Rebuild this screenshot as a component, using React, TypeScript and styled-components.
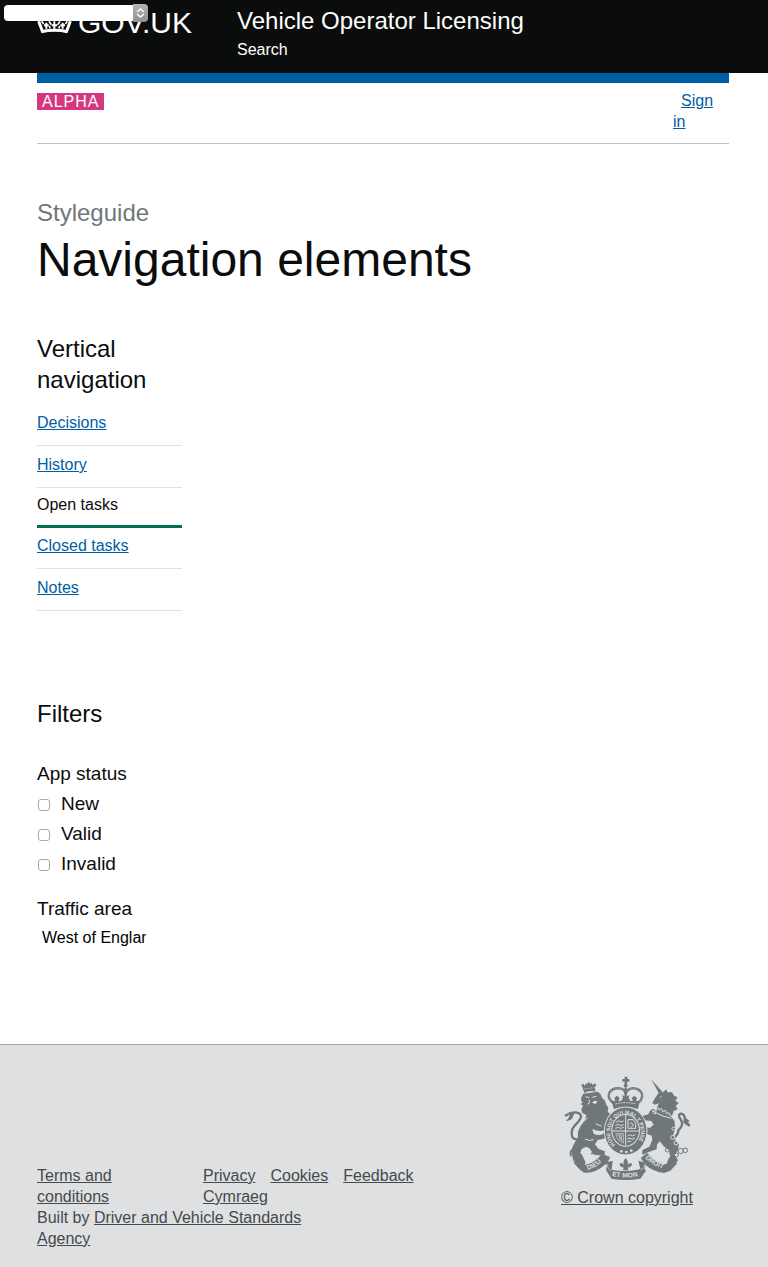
import React from "react";
import styled, { createGlobalStyle, css } from "styled-components";

const GlobalStyle = createGlobalStyle`
  *, *::before, *::after { box-sizing: border-box; }
  body {
    margin: 0;
    background: #fff;
    color: #0b0c0c;
    font-family: "Liberation Sans", Helvetica, Arial, sans-serif;
    font-size: 16px;
    line-height: 21px;
  }
  h1, h2, h3, p, ul, fieldset { margin: 0; padding: 0; font-weight: 400; }
  ul { list-style: none; }
  fieldset { border: 0; min-width: 0; }
`;

const gutters = css`
  padding-left: 37px;
  padding-right: 39px;
`;

const Header = styled.header`
  ${gutters}
  display: flex;
  height: 73px;
  padding-top: 6px;
  background: #0b0c0c;
  color: #fff;
`;

const HomeLink = styled.a`
  display: flex;
  align-items: flex-start;
  gap: 5px;
  width: 200px;
  color: #fff;
  font-size: 30px;
  line-height: 34px;
  text-decoration: none;
`;

const ServiceNav = styled.nav`
  display: flex;
  flex-direction: column;
  align-items: flex-start;
  gap: 3px;
`;

const ServiceLink = styled.a<{ $large?: boolean }>`
  color: #fff;
  text-decoration: none;
  font-size: ${(p) => (p.$large ? 24 : 16)}px;
  line-height: ${(p) => (p.$large ? 30 : 21)}px;
`;

const Switcher = styled.div`
  position: absolute;
  top: 4px;
  left: 4px;
  display: flex;
  width: 144px;
  height: 18px;
`;

const SwitcherSelect = styled.select`
  appearance: none;
  width: 100%;
  height: 16px;
  margin-top: 1px;
  padding: 0 18px 0 6px;
  border: 0;
  border-radius: 4px;
  background: #fff;
  color: #0b0c0c;
  font: inherit;
  font-size: 12px;
  line-height: 16px;
`;

const SwitcherArrows = styled.svg`
  position: absolute;
  top: 0;
  right: 0;
  pointer-events: none;
`;

const Page = styled.div`
  ${gutters}
`;

const PhaseBanner = styled.div`
  display: flex;
  justify-content: space-between;
  align-items: flex-start;
  padding: 7px 0 11px;
  border-top: 10px solid #005ea5;
  border-bottom: 1px solid #bfc1c3;
`;

const PhaseTag = styled.strong`
  margin-top: 3px;
  padding: 0 5px;
  background: #d53880;
  color: #fff;
  font-weight: 400;
  line-height: 17px;
  letter-spacing: 1px;
`;

const Account = styled.div`
  width: 56px;
`;

const Link = styled.a`
  color: #005ea5;
  text-decoration: underline;
`;

const SignIn = styled(Link)`
  padding: 0 16px 0 8px;
`;

const TitleBlock = styled.div`
  padding: 54px 0 48px;
`;

const Caption = styled.p`
  margin-bottom: 7px;
  color: #6f777b;
  font-size: 24px;
  line-height: 30px;
`;

const Title = styled.h1`
  font-size: 48px;
  line-height: 50px;
`;

const Sidebar = styled.div`
  width: 21%;
  min-width: 145px;
`;

const SectionTitle = styled.h2`
  font-size: 24px;
  line-height: 31px;
`;

const NavList = styled.ul`
  margin: 9px 0 87px;
`;

const NavItem = styled.li<{ $current?: boolean }>`
  ${(p) =>
    p.$current
      ? css`
          margin-bottom: -1px;
          padding: 6px 0 10px;
          border-bottom: 3px solid #006f53;
        `
      : css`
          padding: 8px 0 12px;
          border-bottom: 1px solid #dee0e2;
        `}
`;

const FilterForm = styled.form`
  padding: 32px 0 96px;
`;

const Legend = styled.legend`
  padding: 0;
  margin-bottom: 3px;
  font-size: 19px;
  line-height: 25px;
`;

const CheckRow = styled.label`
  display: flex;
  align-items: center;
  gap: 11px;
  padding-left: 1px;
  font-size: 19px;
  line-height: 30px;
`;

const Checkbox = styled.input`
  appearance: none;
  width: 12px;
  height: 12px;
  margin: 2px 0 0;
  border: 1px solid #a9a9a9;
  border-radius: 3px;
  background: #fff;
  &:checked { background: #005ea5; }
`;

const FieldLabel = styled.label`
  display: block;
  margin: 17px 0 6px;
  font-size: 19px;
  line-height: 25px;
`;

const AreaSelect = styled.select`
  display: block;
  appearance: none;
  width: 109px;
  height: 21px;
  padding: 0 0 0 5px;
  border: 0;
  background: #fff;
  color: #000;
  font: inherit;
`;

const Footer = styled.footer`
  ${gutters}
  display: flex;
  justify-content: space-between;
  align-items: flex-end;
  padding-top: 31px;
  padding-bottom: 18px;
  border-top: 1px solid #a1acb2;
  background: #dee0e2;
  color: #454a4c;
`;

const FooterMeta = styled.div`
  width: 64%;
`;

const FooterLinks = styled.div`
  display: flex;
  gap: 15px;
`;

const TermsCell = styled.div`
  flex: 0 0 151px;
  padding-right: 40px;
`;

const LinkList = styled.ul`
  display: flex;
  flex-wrap: wrap;
  column-gap: 15px;
`;

const FooterLink = styled.a`
  color: #454a4c;
  text-decoration: underline;
`;

const BuiltBy = styled.p`
  max-width: 300px;
`;

const Copyright = styled.div`
  display: flex;
  flex-direction: column;
  align-items: center;
  gap: 6px;
  width: 204px;
  padding-bottom: 41px;
`;

const Crown = () => (
  <svg width="36" height="34" viewBox="0 0 108 102" fill="#fff" aria-hidden="true">
    <circle cx="52" cy="12" r="7" />
    <circle cx="30" cy="20" r="7" />
    <circle cx="75" cy="20" r="7" />
    <circle cx="13" cy="34" r="7" />
    <circle cx="92" cy="34" r="7" />
    <g fill="none" stroke="#fff">
      <path d="M5 46 L17 78 M100 46 L88 78" strokeWidth="9" />
      <path d="M13 77 Q52 69 92 77" strokeWidth="9" />
      <path d="M21 58 h14 M28 50 v18 M44 58 h17 M52 46 v26 M70 58 h14 M77 50 v18" strokeWidth="6" />
      <path d="M14 46 L20 54 M36 46 L43 56 M69 46 L62 56 M91 46 L85 54" strokeWidth="5" />
      <path d="M36 60 l4 7 M69 60 l-4 7" strokeWidth="5" />
    </g>
  </svg>
);

const INK = "#6f777b";
const PAPER = "#dee0e2";

const Crest = () => (
  <svg width="127" height="105" viewBox="27 17 381 315" fill={INK} aria-hidden="true">
    <defs>
      <path id="garter" d="M181 224 A46 53 0 1 1 243 223" />
      <path id="leftBanner" d="M98 299 Q130 290 153 261" />
      <path id="midBanner" d="M171 317 Q212 326 262 316" />
      <path id="rightBanner" d="M270 264 Q293 288 340 300" />
    </defs>

    {/* lion */}
    <path d="M88 68 L82 50 L79 44 L84 40 L90 46 L94 38 L97 42 L101 34 L106 41 L110 37 L113 44 L120 39 L124 43 L120 50 L121 64 Q103 59 88 68 Z" />
    <path d="M87 56 L119 52" stroke={PAPER} strokeWidth="2" strokeDasharray="4 3" />
    <path d="M85 70 L128 64 L137 72 L141 83 L149 90 L154 103 L160 112 L158 124 L165 130 L158 144 L153 158 L163 172 L162 190 L156 202 L140 207 L128 209 L120 222 L130 235 L150 243 L148 256 L117 253 L103 234 L93 229 L80 236 L76 247 L82 255 L92 277 L88 287 L68 285 L54 266 L49 240 L56 222 L68 204 L69 184 L77 166 L90 150 L94 134 L82 128 L79 116 L84 106 L77 101 L84 96 L78 91 L79 81 Z" />
    <path d="M92 79 L103 82 M112 81 L124 78 M102 88 L104 97 L97 102" fill="none" stroke={PAPER} strokeWidth="3" />
    <path d="M111 97 L118 91 L128 93 L121 101 Z" fill={PAPER} />
    <path d="M112 176 Q130 186 149 180 L144 192 Q128 197 116 190 Z" fill={PAPER} />
    <path d="M98 142 L88 152 M122 160 L140 168 M90 206 Q104 214 116 208" fill="none" stroke={PAPER} strokeWidth="3" />
    <path d="M30 137 Q46 125 62 126 Q82 129 77 143 Q73 152 60 165 Q45 182 52 200 Q56 208 68 207" fill="none" stroke={INK} strokeWidth="7" />
    <path d="M33 152 Q42 145 45 131 L60 129 Q54 134 52 144 Q46 153 33 152 Z" />
    <path d="M50 238 Q43 248 49 258 M66 284 L59 277 M117 248 L108 250" stroke={INK} strokeWidth="5" />

    {/* unicorn */}
    <path d="M288 26 L323 66 L313 71 Z" />
    <path d="M306 75 L315 63 L321 68 L334 57 L337 66 L351 66 L358 77 L368 81 L361 91 L371 98 L362 107 L368 117 L356 122 L352 134 L342 139 L322 129 L304 114 L312 99 L299 103 L292 98 L299 85 Z" />
    <circle cx="317" cy="80" r="2" fill={PAPER} />
    <path d="M306 115 L322 129 L347 137 L358 151 L361 175 L355 192 L359 207 L372 222 L368 242 L358 254 L369 269 L360 283 L335 281 L339 268 L347 255 L342 239 L326 228 L315 213 L306 222 L305 237 L279 246 L262 254 L262 239 L283 229 L292 209 L290 196 L274 190 L263 183 L266 168 L284 173 L296 163 L289 152 L265 150 L262 137 L280 132 L285 121 L292 119 L294 131 L302 132 Z" />
    <path d="M302 119 L308 111 L313 119 L319 114 L323 124 L331 120 L334 130 L342 127 L346 138" fill="none" stroke={PAPER} strokeWidth="3" />
    <path d="M300 126 L321 136 L349 144" fill="none" stroke={PAPER} strokeWidth="3" />
    <path d="M354 205 Q370 194 370 180 Q388 162 378 149 Q366 132 378 130 Q390 132 390 148 Q394 160 404 166" fill="none" stroke={INK} strokeWidth="7" />
    <path d="M388 140 L404 152 L398 156 L407 168 Q391 167 385 154 Z" />
    <g fill="none" stroke={INK} strokeWidth="3">
      <circle cx="294" cy="123" r="6" />
      <circle cx="356" cy="175" r="5" stroke={PAPER} />
      <circle cx="353" cy="201" r="6" stroke={PAPER} />
      <circle cx="363" cy="218" r="6" stroke={PAPER} />
      <circle cx="337" cy="239" r="6" />
      <circle cx="350" cy="250" r="6" />
      <circle cx="364" cy="254" r="6" />
      <circle cx="377" cy="242" r="8" />
      <circle cx="391" cy="240" r="7" />
    </g>

    {/* royal crown */}
    <path d="M209 19 h8 v7 h6 v8 h-7 v7 h-7 v-7 h-7 v-8 h7 Z" />
    <circle cx="212" cy="46" r="6" />
    <path d="M177 100 Q156 85 163 67 Q174 50 199 55 Q211 60 212 72 Q215 57 230 54 Q253 52 261 70 Q264 88 247 100" fill="none" stroke={INK} strokeWidth="7" />
    <path d="M177 100 Q156 85 163 67 Q174 50 199 55 Q211 60 212 72 Q215 57 230 54 Q253 52 261 70 Q264 88 247 100" fill="none" stroke={PAPER} strokeWidth="2" strokeDasharray="2 4" />
    <path d="M212 53 V83" stroke={INK} strokeWidth="7" />
    <path d="M176 116 L170 91 L181 92 L178 83 L186 76 L194 83 L190 92 L199 91 L204 82 L201 73 L210 79 L212 72 L216 79 L224 73 L221 83 L226 92 L234 91 L230 83 L238 76 L246 83 L243 92 L254 91 L249 116 Q212 104 176 116 Z" />
    <path d="M181 101 Q212 93 244 101" fill="none" stroke={PAPER} strokeWidth="3" strokeDasharray="5 3" />

    {/* garter and shield */}
    <ellipse cx="212" cy="182" rx="64" ry="72" stroke={PAPER} strokeWidth="3" />
    <ellipse cx="212" cy="180" rx="43" ry="49" fill={PAPER} />
    <ellipse cx="212" cy="180" rx="40" ry="46" />
    <path d="M212 134 V226 M172 182 H252" stroke={PAPER} strokeWidth="3" />
    <g fill="none" stroke={PAPER} strokeWidth="3">
      <path d="M183 156 l8 -5 6 4 9 -3 M181 165 l9 -3 7 4 9 -3 M181 174 l9 -3 7 3 9 -3" />
      <path d="M218 197 l8 -4 6 4 9 -4 M217 206 l8 -3 6 4 9 -4 M217 215 l7 -3 5 3" />
      <path d="M219 148 h16 l7 11 v15 h-23 Z M224 161 l6 -4 5 7 -7 8" />
      <path d="M183 190 q0 21 22 28 v-28 Z M188 192 l14 18 M194 192 v16 M199 192 v20" strokeWidth="2" />
    </g>
    <g fill={PAPER}>
      <circle cx="199" cy="243" r="4" />
      <circle cx="214" cy="245" r="4" />
      <circle cx="229" cy="241" r="4" />
    </g>
    <g fill={PAPER} fontFamily="Liberation Sans, sans-serif" fontWeight="700">
      <text fontSize="16">
        <textPath href="#garter">HONI SOIT QUI MAL Y PENSE</textPath>
      </text>
    </g>

    {/* motto ribbon */}
    <path d="M50 264 L64 280 L91 284 Q122 276 141 250 L166 261 L158 274 L173 272 L170 298 Q212 307 256 296 L250 271 L266 276 L257 263 L277 248 Q300 277 326 281 L367 279 L346 301 L327 308 Q293 303 271 283 L269 297 L273 301 L256 325 Q212 333 169 325 L153 299 L156 284 L151 282 Q120 311 87 307 Q67 297 50 264 Z" />
    <path d="M156 280 Q158 298 170 300 M271 279 Q269 294 257 299" fill="none" stroke={PAPER} strokeWidth="2" />
    <path d="M177 273 Q212 258 247 273 L250 297 Q212 305 175 297 Z" fill={PAPER} />
    <path d="M212 263 Q224 277 216 287 Q226 272 231 282 Q230 291 218 292 L221 300 H203 L207 292 Q194 291 194 281 Q199 273 209 287 Q200 277 212 263 Z" />
    <g fill={PAPER} fontFamily="Liberation Sans, sans-serif" fontWeight="700" fontSize="20">
      <text>
        <textPath href="#leftBanner">DIEU</textPath>
      </text>
      <text>
        <textPath href="#midBanner">ET MON</textPath>
      </text>
      <text>
        <textPath href="#rightBanner">DROIT</textPath>
      </text>
    </g>
  </svg>
);

const navItems = ["Decisions", "History", "Open tasks", "Closed tasks", "Notes"];
const currentItem = "Open tasks";
const statuses = ["New", "Valid", "Invalid"];
const footerLinks = ["Privacy", "Cookies", "Feedback", "Cymraeg"];

export default function App() {
  return (
    <>
      <GlobalStyle />
      <Header>
        <HomeLink href="#">
          <Crown />
          GOV.UK
        </HomeLink>
        <ServiceNav>
          <ServiceLink href="#" $large>
            Vehicle Operator Licensing
          </ServiceLink>
          <ServiceLink href="#">Search</ServiceLink>
        </ServiceNav>
      </Header>
      <Switcher>
        <SwitcherSelect aria-label="Page switcher" defaultValue="">
          <option value=""></option>
        </SwitcherSelect>
        <SwitcherArrows width="15" height="18" viewBox="0 0 15 18" aria-hidden="true">
          <defs>
            <linearGradient id="arrowsFill" x1="0" y1="0" x2="0" y2="1">
              <stop offset="0" stopColor="#b3b3b8" />
              <stop offset="1" stopColor="#8f8f94" />
            </linearGradient>
          </defs>
          <path d="M0 0 H11 Q15 0 15 4 V14 Q15 18 11 18 H0 Z" fill="url(#arrowsFill)" />
          <path d="M4 8 L7.500 5 L11 8 M4 10 L7.500 13 L11 10" fill="none" stroke="#fff" strokeWidth="1.500" />
        </SwitcherArrows>
      </Switcher>

      <Page>
        <PhaseBanner>
          <PhaseTag>ALPHA</PhaseTag>
          <Account>
            <SignIn href="#">Sign in</SignIn>
          </Account>
        </PhaseBanner>

        <main>
          <TitleBlock>
            <Caption>Styleguide</Caption>
            <Title>Navigation elements</Title>
          </TitleBlock>

          <Sidebar>
            <SectionTitle>Vertical navigation</SectionTitle>
            <nav aria-label="Vertical navigation">
              <NavList>
                {navItems.map((item) => (
                  <NavItem key={item} $current={item === currentItem}>
                    {item === currentItem ? item : <Link href="#">{item}</Link>}
                  </NavItem>
                ))}
              </NavList>
            </nav>

            <SectionTitle>Filters</SectionTitle>
            <FilterForm>
              <fieldset>
                <Legend>App status</Legend>
                {statuses.map((status) => (
                  <CheckRow key={status}>
                    <Checkbox type="checkbox" name="status" value={status} />
                    {status}
                  </CheckRow>
                ))}
              </fieldset>
              <FieldLabel htmlFor="area">Traffic area</FieldLabel>
              <AreaSelect id="area" defaultValue="west">
                <option value="west">West of England</option>
              </AreaSelect>
            </FilterForm>
          </Sidebar>
        </main>
      </Page>

      <Footer>
        <FooterMeta>
          <FooterLinks>
            <TermsCell>
              <FooterLink href="#">Terms and conditions</FooterLink>
            </TermsCell>
            <LinkList>
              {footerLinks.map((label) => (
                <li key={label}>
                  <FooterLink href="#">{label}</FooterLink>
                </li>
              ))}
            </LinkList>
          </FooterLinks>
          <BuiltBy>
            Built by <FooterLink href="#">Driver and Vehicle Standards Agency</FooterLink>
          </BuiltBy>
        </FooterMeta>
        <Copyright>
          <Crest />
          <FooterLink href="#">© Crown copyright</FooterLink>
        </Copyright>
      </Footer>
    </>
  );
}
